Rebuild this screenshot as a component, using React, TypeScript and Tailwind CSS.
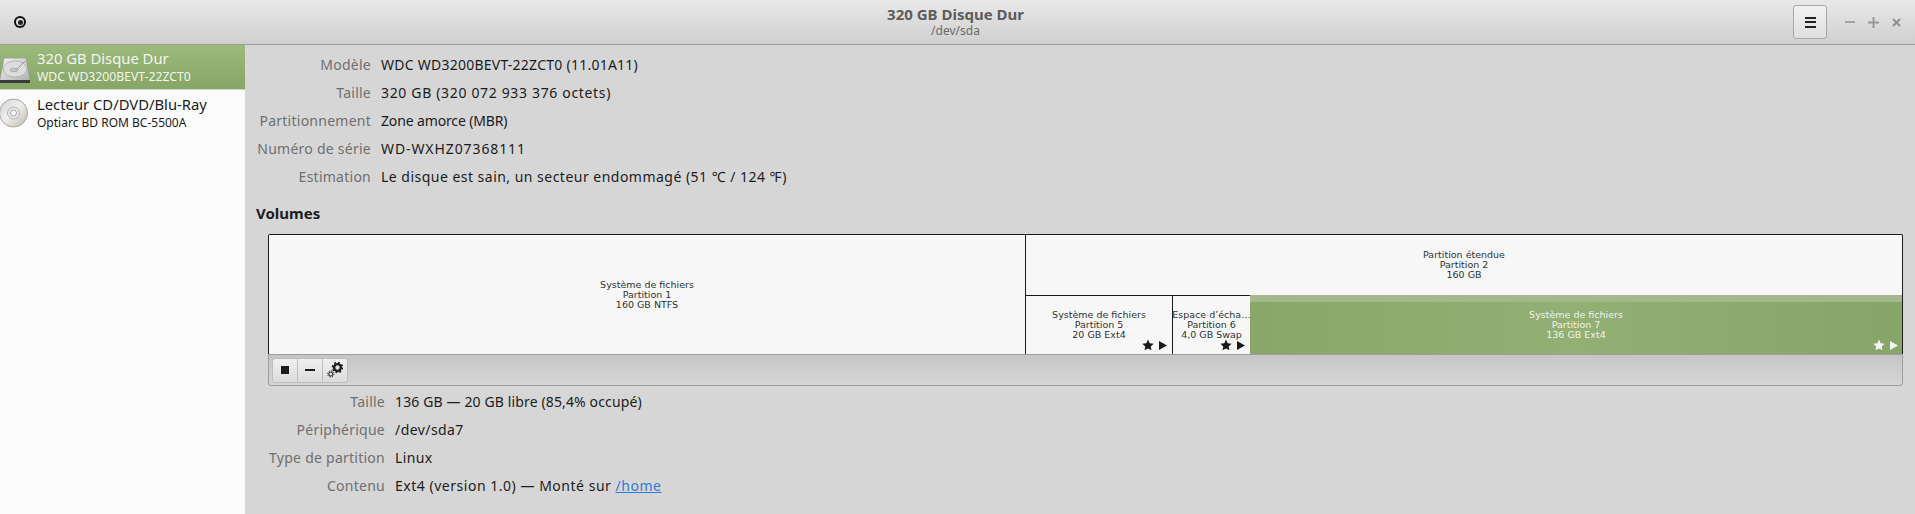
import type { ReactNode } from 'react';

const font = "[font-family:'Noto_Sans',sans-serif]";

function Rows({ rows, labelWidth }: { rows: [string, ReactNode][]; labelWidth: string }) {
  return (
    <div className={`grid ${labelWidth} gap-x-[10px] text-[14px] leading-[28px]`}>
      {rows.map(([label, value]) => (
        <div key={label} className="contents">
          <div className="text-right tracking-[0.25px] text-[#6f6f6f] whitespace-nowrap">{label}</div>
          <div className="text-[#1c1c1c] whitespace-nowrap">{value}</div>
        </div>
      ))}
    </div>
  );
}

function DiskIcon() {
  return (
    <svg width="34" height="38" viewBox="0 0 34 38" className="shrink-0">
      <defs>
        <linearGradient id="hdd" x1="0" y1="0" x2="1" y2="1">
          <stop offset="0" stopColor="#f0f0f0" />
          <stop offset="1" stopColor="#b0b0b0" />
        </linearGradient>
      </defs>
      <path d="M4 10h22l4 21v2H0v-2z" fill="url(#hdd)" stroke="#8f8f8f" strokeWidth="0.6" />
      <ellipse cx="15" cy="21" rx="12" ry="8" fill="#dcdcdc" stroke="#a0a0a0" strokeWidth="0.6" />
      <ellipse cx="14" cy="22" rx="4" ry="1.8" fill="#c4c4c4" stroke="#8c8c8c" strokeWidth="0.5" />
      <path d="M25 13l-8 8" stroke="#8a8a8a" strokeWidth="0.8" />
      <rect x="0" y="32" width="30" height="3" fill="#3b3b3b" />
    </svg>
  );
}

function CdIcon() {
  return (
    <svg width="34" height="38" viewBox="0 0 34 38" className="shrink-0">
      <defs>
        <linearGradient id="cd" x1="0" y1="0" x2="1" y2="1">
          <stop offset="0" stopColor="#cfcfcf" />
          <stop offset="0.45" stopColor="#efefef" />
          <stop offset="0.7" stopColor="#dcd6cf" />
          <stop offset="1" stopColor="#b5b5b5" />
        </linearGradient>
      </defs>
      <circle cx="13.5" cy="19" r="14" fill="url(#cd)" stroke="#a8a8a8" />
      <circle cx="13.5" cy="19" r="6" fill="#e6e6e6" stroke="#b5b5b5" />
      <circle cx="13.5" cy="19" r="3" fill="#f8f8f8" stroke="#a8a8a8" />
    </svg>
  );
}

function GearsIcon() {
  return (
    <svg width="16" height="16" viewBox="0 0 16 16">
      <circle cx="10.5" cy="5.5" r="3.4" fill="none" stroke="#1c1c1c" strokeWidth="2.4" />
      <circle cx="10.5" cy="5.5" r="5" fill="none" stroke="#1c1c1c" strokeWidth="1.6" strokeDasharray="1.9 2" />
      <circle cx="3.8" cy="12" r="2" fill="none" stroke="#1c1c1c" strokeWidth="1" />
      <circle cx="3.8" cy="12" r="3.1" fill="none" stroke="#1c1c1c" strokeWidth="1" strokeDasharray="1.2 1.2" />
    </svg>
  );
}

function Marks({ light }: { light?: boolean }) {
  const color = light ? 'text-[#f4f4f4] right-[4px]' : 'text-[#1a1a1a] right-[5px]';
  return (
    <div className={`absolute bottom-[3px] flex items-center gap-[3px] ${color}`}>
      <svg width="12" height="12" viewBox="0 0 24 24" fill="currentColor">
        <path d="M12 1l3.4 7.3 7.9 1-5.8 5.5 1.5 7.9-7-3.9-7 3.9 1.5-7.9L.7 9.3l7.9-1z" />
      </svg>
      <svg width="8" height="9" viewBox="0 0 8 9" fill="currentColor" className="ml-[2px]">
        <path d="M0 0l8 4.5L0 9z" />
      </svg>
    </div>
  );
}

function Partition({ lines, className, marks, light }: { lines: string[]; className: string; marks?: boolean; light?: boolean }) {
  return (
    <div
      className={`relative flex flex-col items-center justify-center overflow-hidden text-[9.5px] leading-[10px] whitespace-nowrap font-['DejaVu_Sans',sans-serif] ${
        light ? 'text-[#f0f3ea]' : 'text-[#2e3436]'
      } ${className}`}
    >
      {lines.map((line) => (
        <div key={line}>{line}</div>
      ))}
      {marks && <Marks light={light} />}
    </div>
  );
}

function ToolButton({ children, className }: { children: ReactNode; className?: string }) {
  return (
    <div
      className={`flex h-[25px] w-[26px] items-center justify-center border border-[#bdbdbd] bg-gradient-to-b from-[#f0f0f0] to-[#dcdcdc] ${className ?? ''}`}
    >
      {children}
    </div>
  );
}

export default function App() {
  return (
    <div className={`flex h-screen w-full flex-col overflow-hidden bg-[#d6d6d6] ${font}`}>
      <header className="grid h-[45px] shrink-0 grid-cols-[1fr_auto_1fr] items-center border-b border-[#9b9b9b] bg-gradient-to-b from-[#e9e9e9] to-[#cfcfcf] pr-[14px] pl-[10px]">
        <div>
          <div className="ml-[4px] flex h-3 w-3 items-center justify-center rounded-full bg-[#111111]">
            <div className="flex h-2 w-2 items-center justify-center rounded-full bg-[#dddddd]">
              <div className="h-[5px] w-[5px] rounded-full bg-[#222222]" />
            </div>
          </div>
        </div>
        <div className="text-center">
          <div className="text-[15px] leading-[18px] font-bold text-[#5c5c5c]">320 GB Disque Dur</div>
          <div className="text-[12px] leading-[16px] text-[#6b6b6b]">/dev/sda</div>
        </div>
        <div className="flex items-center justify-end">
          <div className="flex h-[34px] w-[34px] items-center justify-center rounded-[3px] border border-[#a8a8a8] bg-gradient-to-b from-[#f2f2f2] to-[#dedede]">
            <div className="flex h-[11px] w-[11px] flex-col justify-between">
              <div className="h-[2px] bg-[#222222]" />
              <div className="h-[2px] bg-[#222222]" />
              <div className="h-[2px] bg-[#222222]" />
            </div>
          </div>
          <div className="ml-[18px] flex w-[56px] items-center justify-between text-[#9a9a9a]">
            <div className="h-[2px] w-[10px] bg-[#a3a3a3]" />
            <svg width="11" height="11" viewBox="0 0 11 11"><path d="M5.5 0v11M0 5.5h11" stroke="#9a9a9a" strokeWidth="2" /></svg>
            <svg width="9" height="9" viewBox="0 0 9 9"><path d="M1 1l7 7M8 1L1 8" stroke="#8f8f8f" strokeWidth="2" /></svg>
          </div>
        </div>
      </header>

      <div className="flex min-h-0 flex-1">
        <aside className="w-[245px] shrink-0 bg-[#fbfbfb]">
          <div className="flex h-[45px] items-center gap-[2px] border-b border-[#cdd6c4] bg-gradient-to-b from-[#9cba7b] to-[#86a566] text-[#f3f6ee]">
            <DiskIcon />
            <div className="mt-[-1px] ml-px">
              <div className="text-[14.8px] leading-[20px]">320 GB Disque Dur</div>
              <div className="text-[12.2px] leading-[17px]">WDC WD3200BEVT-22ZCT0</div>
            </div>
          </div>
          <div className="flex h-[45px] items-center gap-[2px] text-[#1c1c1c]">
            <CdIcon />
            <div className="mt-[-1px] ml-px">
              <div className="text-[14.8px] leading-[20px]">Lecteur CD/DVD/Blu-Ray</div>
              <div className="text-[12px] leading-[17px]">Optiarc BD ROM BC-5500A</div>
            </div>
          </div>
        </aside>

        <main className="min-w-0 flex-1 pt-[6px] pr-[12px] pl-[11px]">
          <Rows
            labelWidth="grid-cols-[115px_1fr]"
            rows={[
              ['Modèle', <span className="tracking-[0.24px]">WDC WD3200BEVT-22ZCT0 (11.01A11)</span>],
              ['Taille', <span className="tracking-[0.66px]">320 GB (320 072 933 376 octets)</span>],
              ['Partitionnement', <span className="tracking-[-0.14px]">Zone amorce (MBR)</span>],
              ['Numéro de série', <span className="tracking-[0.9px]">WD-WXHZ07368111</span>],
              ['Estimation', <span className="tracking-[0.48px]">Le disque est sain, un secteur endommagé (51 ℃ / 124 ℉)</span>],
            ]}
          />
          <div className="mt-[12px] text-[15px] leading-[20px] font-bold text-[#1c1c1c]">Volumes</div>

          <div className="mt-[11px] ml-[12px]">
            <div className="flex h-[120px] rounded-t-[2px] border-x border-t border-[#1a1a1a] bg-[#f7f7f7]">
              <Partition
                lines={['Système de fichiers', 'Partition 1', '160 GB NTFS']}
                className="w-[757px] shrink-0 border-r border-[#1a1a1a]"
              />
              <div className="flex min-w-0 flex-1 flex-col">
                <Partition lines={['Partition étendue', 'Partition 2', '160 GB']} className="h-[60px] shrink-0" />
                <div className="flex min-h-0 flex-1">
                  <Partition
                    lines={['Système de fichiers', 'Partition 5', '20 GB Ext4']}
                    className="w-[147px] shrink-0 border-t border-r border-[#1a1a1a]"
                    marks
                  />
                  <Partition
                    lines={['Espace d’écha…', 'Partition 6', '4,0 GB Swap']}
                    className="w-[77px] shrink-0 border-t border-[#1a1a1a]"
                    marks
                  />
                  <Partition
                    lines={['Système de fichiers', 'Partition 7', '136 GB Ext4']}
                    className="min-w-0 flex-1 border-t-[7px] border-[#a4b88b] bg-gradient-to-r from-[#8aa76a] via-[#93b074] to-[#88a569] pb-[7px]"
                    marks
                    light
                  />
                </div>
              </div>
            </div>
            <div className="flex h-[32px] items-center rounded-b-[3px] border border-[#9e9e9e] bg-gradient-to-b from-[#c6c6c6] to-[#d6d6d6] pl-[3px]">
              <ToolButton className="rounded-l-[3px]">
                <div className="h-[8px] w-[8px] bg-[#1c1c1c]" />
              </ToolButton>
              <ToolButton className="-ml-px">
                <div className="h-[2px] w-[10px] bg-[#1c1c1c]" />
              </ToolButton>
              <ToolButton className="-ml-px rounded-r-[3px]">
                <GearsIcon />
              </ToolButton>
            </div>
          </div>

          <div className="mt-[2px]">
            <Rows
              labelWidth="grid-cols-[129px_1fr]"
              rows={[
                ['Taille', <span className="tracking-[0.13px]">136 GB — 20 GB libre (85,4% occupé)</span>],
                ['Périphérique', <span className="tracking-[0.43px]">/dev/sda7</span>],
                ['Type de partition', <span className="tracking-[0.4px]">Linux</span>],
                ['Contenu', <span className="tracking-[0.52px]">Ext4 (version 1.0) — Monté sur <a className="text-[#2f7bd8] underline">/home</a></span>],
              ]}
            />
          </div>
        </main>
      </div>
    </div>
  );
}
